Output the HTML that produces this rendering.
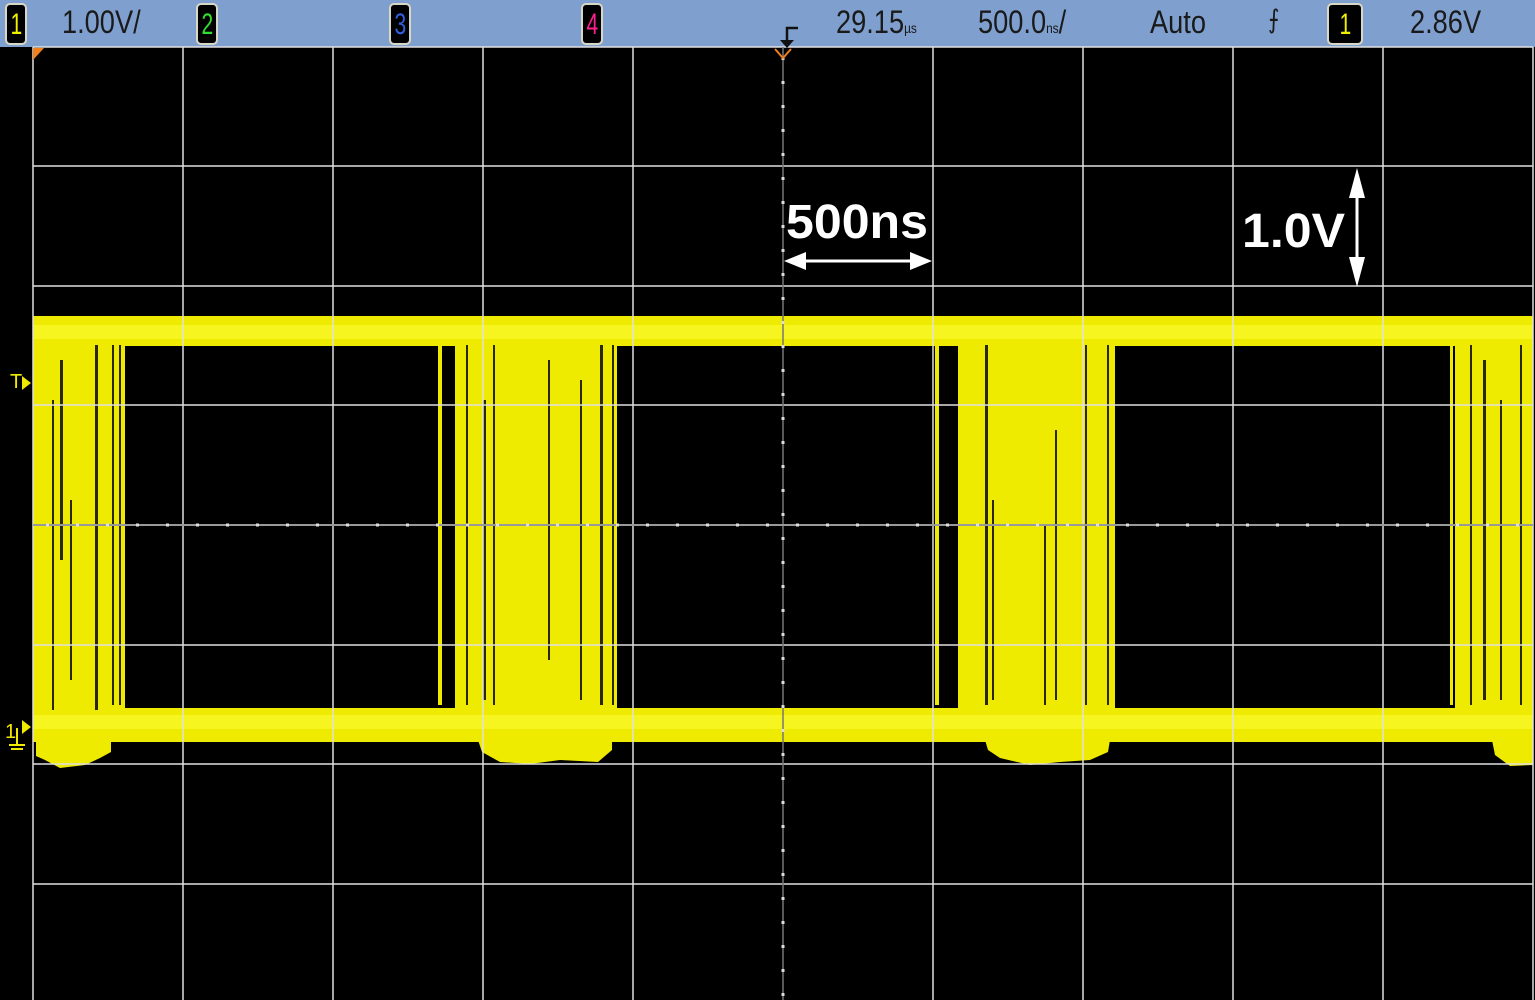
<!DOCTYPE html>
<html><head><meta charset="utf-8"><style>
html,body{margin:0;padding:0;background:#000;width:1535px;height:1000px;overflow:hidden}
.bar{position:absolute;left:0;top:0;width:1535px;height:47px;background:#7fa0cf;font-family:"Liberation Sans",sans-serif;font-size:32px;color:#1a1a1a}
.t{position:absolute;top:4px;transform:scaleX(0.85);transform-origin:left}
.b{position:absolute;top:3px;width:22px;height:42px;background:#000;border:2px solid #d8d8c8;border-radius:5px;font-size:30px;text-align:center;line-height:40px;box-sizing:border-box}
.b span{display:inline-block;transform:scaleX(0.7)}
</style></head><body>
<div class="bar">
<div class="b" style="left:5px;color:#f0f000"><span>1</span></div>
<div class="t" style="left:62px">1.00V/</div>
<div class="b" style="left:196px;color:#30e030"><span>2</span></div>
<div class="b" style="left:389px;color:#3060e0"><span>3</span></div>
<div class="b" style="left:581px;color:#ff2090"><span>4</span></div>
<div class="t" style="left:836px">29.15<span style="font-size:14px">µs</span></div>
<div class="t" style="left:978px">500.0<span style="font-size:14px">ns</span>/</div>
<div class="t" style="left:1150px">Auto</div>
<div class="t" style="left:1268px;font-size:26px">⨍</div>
<div class="b" style="left:1327px;width:36px;color:#f0f000"><span>1</span></div>
<div class="t" style="left:1410px">2.86V</div>
</div>
<svg width="1535" height="1000" style="position:absolute;left:0;top:0">
<g fill="#eeea00">
<rect x="33" y="316" width="1500" height="30"/>
<rect x="33" y="708" width="1500" height="34"/>
<rect x="33" y="320" width="92" height="420"/>
<rect x="455" y="320" width="162" height="420"/>
<rect x="958" y="320" width="157" height="420"/>
<rect x="1455" y="320" width="78" height="420"/>
<path d="M36,740 L111,740 L111,752 L100,758 L85,765 L60,768 L45,760 L36,756Z"/>
<path d="M478,740 L612,740 L612,750 L598,762 L560,760 L530,764 L500,762 L482,752Z"/>
<path d="M985,740 L1110,740 L1108,752 L1090,760 L1060,762 L1030,765 L1000,758 L988,750Z"/>
<path d="M1492,740 L1533,740 L1533,765 L1510,766 L1495,755Z"/>
<rect x="438" y="345" width="4" height="360"/>
<rect x="935" y="345" width="4" height="360"/>
<rect x="1450" y="345" width="3" height="360"/>
</g>
<g fill="#ffff40" opacity="0.5"><rect x="33" y="325" width="1500" height="14"/><rect x="33" y="715" width="1500" height="14"/></g>
<g fill="#2a2800">
<rect x="52" y="400" width="2" height="310"/><rect x="60" y="360" width="3" height="200"/><rect x="95" y="345" width="3" height="365"/><rect x="112" y="345" width="2" height="360"/><rect x="119" y="345" width="2" height="360"/><rect x="70" y="500" width="2" height="180"/>
<rect x="466" y="345" width="2" height="360"/><rect x="483" y="400" width="3" height="300"/><rect x="493" y="345" width="2" height="360"/><rect x="548" y="360" width="2" height="300"/><rect x="580" y="380" width="2" height="320"/><rect x="600" y="345" width="3" height="360"/><rect x="612" y="345" width="2" height="360"/>
<rect x="985" y="345" width="3" height="360"/><rect x="992" y="500" width="2" height="200"/><rect x="1044" y="525" width="2" height="180"/><rect x="1055" y="430" width="2" height="270"/><rect x="1085" y="345" width="2" height="360"/><rect x="1107" y="345" width="2" height="360"/>
<rect x="1470" y="345" width="2" height="360"/><rect x="1483" y="360" width="3" height="340"/><rect x="1500" y="400" width="2" height="300"/><rect x="1520" y="345" width="2" height="360"/>
</g>
<g stroke="#e0e0e0" stroke-width="1.5">
<line x1="33" y1="47" x2="33" y2="1000"/><line x1="183" y1="47" x2="183" y2="1000"/><line x1="333" y1="47" x2="333" y2="1000"/><line x1="483" y1="47" x2="483" y2="1000"/><line x1="633" y1="47" x2="633" y2="1000"/><line x1="933" y1="47" x2="933" y2="1000"/><line x1="1083" y1="47" x2="1083" y2="1000"/><line x1="1233" y1="47" x2="1233" y2="1000"/><line x1="1383" y1="47" x2="1383" y2="1000"/><line x1="1533" y1="47" x2="1533" y2="1000"/>
<line x1="33" y1="47" x2="1533" y2="47"/><line x1="33" y1="166" x2="1533" y2="166"/><line x1="33" y1="286" x2="1533" y2="286"/><line x1="33" y1="405" x2="1533" y2="405"/><line x1="33" y1="645" x2="1533" y2="645"/><line x1="33" y1="764" x2="1533" y2="764"/><line x1="33" y1="884" x2="1533" y2="884"/>
</g>
<line x1="783" y1="47" x2="783" y2="1000" stroke="#777" stroke-width="1.5"/>
<line x1="33" y1="525" x2="1533" y2="525" stroke="#999" stroke-width="2"/>
<g stroke="#ddd" stroke-width="3" stroke-dasharray="3,27" stroke-dashoffset="-13">
<line x1="783" y1="47" x2="783" y2="1000" stroke-dasharray="3,21" stroke-dashoffset="-10"/><line x1="33" y1="525" x2="1533" y2="525"/>
</g>
<polygon points="33,48 44,48 33,60" fill="#f08020"/>
<path d="M775,49 L783,58 L791,49" stroke="#f08020" stroke-width="2" fill="none"/>
<path d="M798,28 L787,28 L787,42" stroke="#111" stroke-width="2.5" fill="none"/>
<polygon points="780,40 794,40 787,48" fill="#111"/>
<text x="10" y="388" fill="#eeea00" font-family="Liberation Sans" font-size="20">T</text>
<polygon points="22,376 31,383 22,390" fill="#eeea00"/>
<text x="5" y="738" fill="#eeea00" font-family="Liberation Sans" font-size="20">1</text>
<polygon points="22,720 31,727 22,734" fill="#eeea00"/>
<path d="M17,728 L17,745 M9,745 L25,745 M11,749 L23,749" stroke="#eeea00" stroke-width="2"/>
<text x="786" y="238" fill="#fff" font-family="Liberation Sans" font-weight="bold" font-size="48" textLength="142" lengthAdjust="spacingAndGlyphs">500ns</text>
<line x1="795" y1="261" x2="920" y2="261" stroke="#fff" stroke-width="3"/>
<polygon points="784,261 806,252 806,270" fill="#fff"/><polygon points="932,261 910,252 910,270" fill="#fff"/>
<text x="1242" y="247" fill="#fff" font-family="Liberation Sans" font-weight="bold" font-size="48" textLength="103" lengthAdjust="spacingAndGlyphs">1.0V</text>
<line x1="1357" y1="185" x2="1357" y2="275" stroke="#fff" stroke-width="3"/>
<polygon points="1357,168 1349,198 1365,198" fill="#fff"/><polygon points="1357,287 1349,257 1365,257" fill="#fff"/>
</svg>
</body></html>
